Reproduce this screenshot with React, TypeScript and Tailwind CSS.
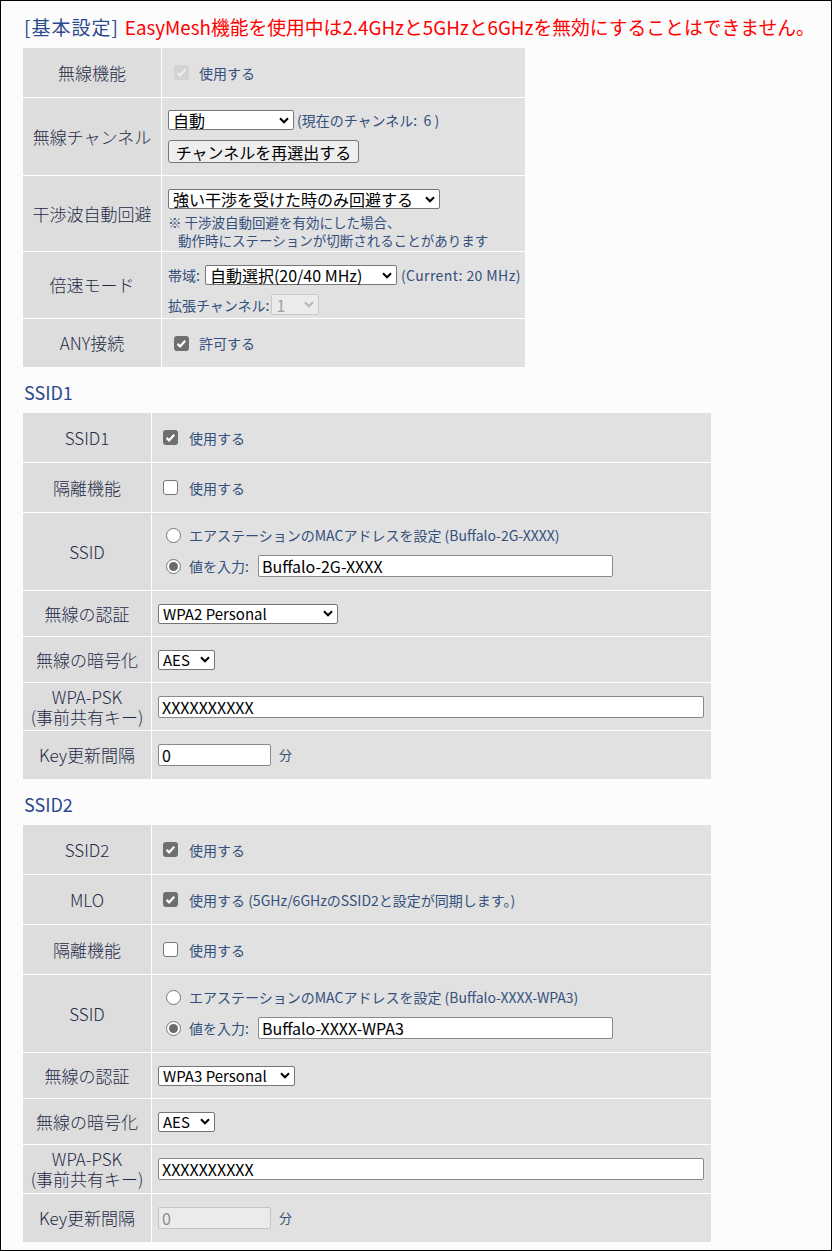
import type { ReactNode } from 'react'

const BLUE = 'text-[#34507d]'

function Check({ state }: { state: 'on' | 'off' | 'disabled' }) {
  if (state === 'off') {
    return <span className="inline-block w-[15px] h-[15px] shrink-0 rounded-[3px] border border-[#767676] bg-white" />
  }
  const bg = state === 'on' ? 'bg-[#6f6f6f]' : 'bg-[#d3d3d3]'
  return (
    <span className={`inline-flex w-[15px] h-[15px] shrink-0 items-center justify-center rounded-[3px] ${bg}`}>
      <svg viewBox="0 0 15 15" className="w-[15px] h-[15px]">
        <path d="M3.6 7.9l2.5 2.5 5.1-5.6" fill="none" stroke={state === 'on' ? '#ffffff' : '#eeeeee'} strokeWidth="2.2" />
      </svg>
    </span>
  )
}

function Radio({ on }: { on?: boolean }) {
  return (
    <span className="inline-flex w-[15px] h-[15px] shrink-0 items-center justify-center rounded-full border border-[#767676] bg-white">
      {on && <span className="w-[9px] h-[9px] rounded-full bg-[#6c6c6c]" />}
    </span>
  )
}

function Chevron({ color = '#000' }: { color?: string }) {
  return (
    <svg viewBox="0 0 10 7" className="w-[10px] h-[7px] shrink-0">
      <path d="M1 1.3l4 4 4-4" fill="none" stroke={color} strokeWidth="2" />
    </svg>
  )
}

function Select({ value, w, size = 'text-[16px]', h = 'h-[20px]', disabled, className = '' }: {
  value: string; w: string; size?: string; h?: string; disabled?: boolean; className?: string
}) {
  const tone = disabled
    ? 'border-[#c8c8c8] bg-[#ebebeb] text-[#a0a0a0]'
    : 'border-[#767676] bg-white text-black'
  return (
    <span className={`inline-flex items-center justify-between gap-1 ${w} ${h} border rounded-[2px] pl-[4px] pr-[4px] ${tone} ${size} leading-none ${className}`}>
      <span className="whitespace-nowrap">{value}</span>
      <Chevron color={disabled ? '#b5b5b5' : '#000'} />
    </span>
  )
}

function Field({ value, w, disabled, className = '' }: {
  value: string; w: string; disabled?: boolean; className?: string
}) {
  const tone = disabled
    ? 'border-[#c4c4c4] bg-[#ebebeb] text-[#8c8c8c]'
    : 'border-[#8a8a8a] bg-white text-black'
  return (
    <span className={`inline-flex items-center ${w} h-[22px] border rounded-[2px] px-[3px] ${tone} text-[16px] leading-none ${className}`}>
      {value}
    </span>
  )
}

function Row({ label, h, children, className = 'items-center pl-[6px]' }: {
  label: ReactNode; h: string; children: ReactNode; className?: string
}) {
  return (
    <>
      <div className={`${h} bg-[#dddddd] flex items-center justify-center text-center text-[17px] leading-[20px] font-light text-[#1f2b48]`}>
        {label}
      </div>
      <div className={`${h} bg-[#e1e1e1] flex ${className}`}>{children}</div>
    </>
  )
}

function CheckLine({ state, text, pl = 'pl-[11px]', gap = 'gap-[11px]' }: {
  state: 'on' | 'off' | 'disabled'; text: string; pl?: string; gap?: string
}) {
  return (
    <div className={`flex items-center ${pl} ${gap}`}>
      <Check state={state} />
      <span className={`text-[14px] leading-[18px] ${BLUE} whitespace-nowrap`}>{text}</span>
    </div>
  )
}

const PSK_LABEL = (
  <span className="leading-[20px]">
    WPA-PSK
    <br />
    (事前共有キー)
  </span>
)

function SsidRow({ mac, value }: { mac: string; value: string }) {
  return (
    <Row label="SSID" h="h-[77px]" className="flex-col justify-center pl-[14px] gap-[11px]">
      <div className="flex items-center gap-[8px] h-[18px]">
        <Radio />
        <span className={`text-[14px] leading-[18px] ${BLUE} whitespace-nowrap`}>{mac}</span>
      </div>
      <div className="flex items-center gap-[8px]">
        <Radio on />
        <span className={`text-[14px] leading-[18px] ${BLUE} whitespace-nowrap`}>値を入力:</span>
        <Field value={value} w="w-[355px]" className="ml-[1px]" />
      </div>
    </Row>
  )
}

function Heading({ children }: { children: ReactNode }) {
  return (
    <div className="h-[46px] pt-[14px] pl-[1px] text-[18px] leading-[22px] text-[#2c4a8e]">{children}</div>
  )
}

export default function App() {
  return (
    <div className="w-[832px] h-[1251px] border border-black bg-[#fcfcfc] overflow-hidden font-['Noto_Sans_CJK_JP','Noto_Sans',sans-serif]">
      <div className="pl-[22px]">
        {/* title */}
        <div className="h-[47px] pt-[15px] pl-[1px] text-[19px] leading-[22px] whitespace-nowrap">
          <span className="text-[#2c4a8e] tracking-[1px]">[基本設定]</span>
          <span className="ml-[6px] text-[18.8px] text-[#ff0000]">EasyMesh機能を使用中は2.4GHzと5GHzと6GHzを無効にすることはできません。</span>
        </div>

        {/* basic settings */}
        <div className="grid grid-cols-[138px_363px] gap-px bg-white w-[502px]">
          <Row label="無線機能" h="h-[49px]">
            <CheckLine state="disabled" text="使用する" pl="pl-[6px]" gap="gap-[10px]" />
          </Row>

          <Row label="無線チャンネル" h="h-[77px]" className="flex-col items-start pl-[6px] pt-[12px]">
            <div className="flex items-center h-[20px]">
              <Select value="自動" w="w-[126px]" />
              <span className={`ml-[3px] text-[14px] leading-[18px] ${BLUE} whitespace-nowrap`}>(現在のチャンネル:&nbsp; 6 )</span>
            </div>
            <button type="button" className="mt-[10px] w-[191px] h-[23px] border border-[#767676] bg-[#efefef] rounded-[3px] text-[16px] leading-none text-black">
              チャンネルを再選出する
            </button>
          </Row>

          <Row label="干渉波自動回避" h="h-[75px]" className="flex-col items-start pl-[6px] pt-[13px]">
            <Select value="強い干渉を受けた時のみ回避する" w="w-[272px]" />
            <div className={`mt-[4px] text-[13.5px] leading-[18px] ${BLUE} whitespace-nowrap`}>
              <div>※ 干渉波自動回避を有効にした場合、</div>
              <div className="pl-[10px]">動作時にステーションが切断されることがあります</div>
            </div>
          </Row>

          <Row label="倍速モード" h="h-[66px]" className="flex-col items-start pl-[6px] pt-[13px]">
            <div className="flex items-center h-[20px]">
              <span className={`text-[14px] leading-[18px] ${BLUE} whitespace-nowrap`}>帯域:</span>
              <Select value="自動選択(20/40 MHz)" w="w-[192px]" className="ml-[5px]" />
              <span className={`ml-[4px] text-[14px] leading-[18px] tracking-[0.4px] ${BLUE} whitespace-nowrap`}>(Current: 20 MHz)</span>
            </div>
            <div className="mt-[9px] flex items-center h-[21px]">
              <span className={`text-[14px] leading-[18px] ${BLUE} whitespace-nowrap`}>拡張チャンネル:</span>
              <Select value="1" w="w-[48px]" h="h-[21px]" disabled className="ml-[2px]" />
            </div>
          </Row>

          <Row label="ANY接続" h="h-[48px]">
            <CheckLine state="on" text="許可する" pl="pl-[6px]" gap="gap-[10px]" />
          </Row>
        </div>

        <Heading>SSID1</Heading>

        <div className="grid grid-cols-[128px_559px] gap-px bg-white w-[688px]">
          <Row label="SSID1" h="h-[49px]" className="items-center">
            <CheckLine state="on" text="使用する" />
          </Row>
          <Row label="隔離機能" h="h-[49px]" className="items-center">
            <CheckLine state="off" text="使用する" />
          </Row>
          <SsidRow mac="エアステーションのMACアドレスを設定 (Buffalo-2G-XXXX)" value="Buffalo-2G-XXXX" />
          <Row label="無線の認証" h="h-[45px]">
            <Select value="WPA2 Personal" w="w-[180px]" size="text-[15px]" />
          </Row>
          <Row label="無線の暗号化" h="h-[45px]">
            <Select value="AES" w="w-[57px]" size="text-[15px]" />
          </Row>
          <Row label={PSK_LABEL} h="h-[47px]">
            <Field value="XXXXXXXXXX" w="w-[546px]" />
          </Row>
          <Row label="Key更新間隔" h="h-[48px]">
            <Field value="0" w="w-[113px]" />
            <span className={`ml-[8px] text-[13px] ${BLUE}`}>分</span>
          </Row>
        </div>

        <Heading>SSID2</Heading>

        <div className="grid grid-cols-[128px_559px] gap-px bg-white w-[688px]">
          <Row label="SSID2" h="h-[49px]" className="items-center">
            <CheckLine state="on" text="使用する" />
          </Row>
          <Row label="MLO" h="h-[49px]" className="items-center">
            <CheckLine state="on" text="使用する (5GHz/6GHzのSSID2と設定が同期します。)" />
          </Row>
          <Row label="隔離機能" h="h-[49px]" className="items-center">
            <CheckLine state="off" text="使用する" />
          </Row>
          <SsidRow mac="エアステーションのMACアドレスを設定 (Buffalo-XXXX-WPA3)" value="Buffalo-XXXX-WPA3" />
          <Row label="無線の認証" h="h-[45px]">
            <Select value="WPA3 Personal" w="w-[137px]" size="text-[15px]" />
          </Row>
          <Row label="無線の暗号化" h="h-[45px]">
            <Select value="AES" w="w-[57px]" size="text-[15px]" />
          </Row>
          <Row label={PSK_LABEL} h="h-[48px]">
            <Field value="XXXXXXXXXX" w="w-[546px]" />
          </Row>
          <Row label="Key更新間隔" h="h-[48px]">
            <Field value="0" w="w-[113px]" disabled />
            <span className={`ml-[8px] text-[13px] ${BLUE}`}>分</span>
          </Row>
        </div>
      </div>
    </div>
  )
}
